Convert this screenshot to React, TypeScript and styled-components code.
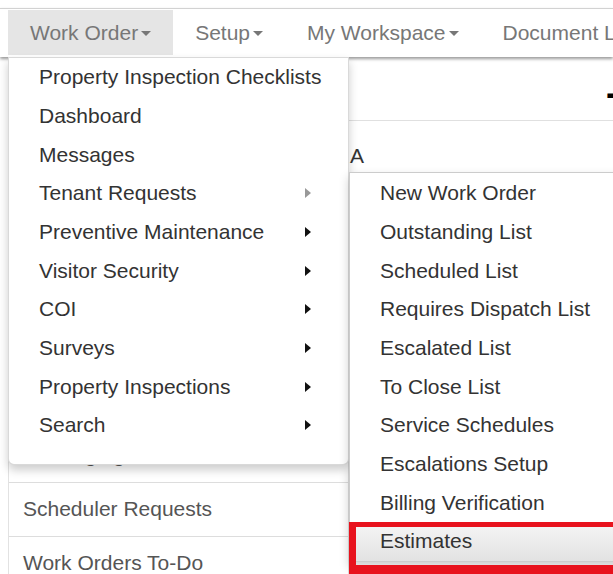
import styled, { createGlobalStyle } from "styled-components";

const GlobalStyle = createGlobalStyle`
  body {
    margin: 0;
    background: #fff;
    font-family: "Liberation Sans", Arial, sans-serif;
    overflow: hidden;
  }
  *, *::before, *::after {
    box-sizing: border-box;
  }
`;

const Page = styled.div`
  position: relative;
  width: 613px;
  height: 574px;
  overflow: hidden;
`;

const NavBar = styled.nav`
  position: relative;
  z-index: 2;
  display: flex;
  height: 49px;
  margin-top: 8px;
  padding: 1px 0 2px 8px;
  border-top: 1px solid #d2d2d2;
  background: #fff;
  box-shadow: 0 2px 3px rgba(0, 0, 0, 0.4);
`;

const NavLink = styled.a<{ $open?: boolean }>`
  display: flex;
  align-items: center;
  padding: 0 22px;
  font-size: 21px;
  color: #777;
  white-space: nowrap;
  background: ${(p) => (p.$open ? "#e5e5e5" : "transparent")};
`;

const Caret = styled.span`
  display: inline-block;
  width: 0;
  height: 0;
  margin: 2px 0 0 3px;
  border-top: 5px solid #777;
  border-left: 5px solid transparent;
  border-right: 5px solid transparent;
`;

const Body = styled.div`
  display: grid;
  grid-template-columns: 341px 1fr;
  margin-left: 8px;
`;

const Sidebar = styled.aside`
  border-left: 1px solid #e2e2e2;
  border-right: 1px solid #ddd;
`;

const SideHeader = styled.div`
  height: 48px;
`;

const SideItem = styled.div`
  display: flex;
  align-items: center;
  height: 54px;
  padding: 0 0 2px 14px;
  border-bottom: 1px solid #ddd;
  font-size: 21px;
  color: #555;
  white-space: nowrap;
`;

const Content = styled.section`
  display: flex;
  flex-direction: column;
`;

const TitleBar = styled.div`
  display: flex;
  align-items: center;
  height: 64px;
  padding: 8px 0 0 257px;
  border-bottom: 1px solid #e0e0e0;
`;

const Title = styled.h2`
  margin: 0;
  font-size: 36px;
  font-weight: bold;
  color: #000;
  white-space: nowrap;
`;

const InfoRow = styled.div`
  display: flex;
  align-items: center;
  height: 70px;
  padding-left: 1px;
  font-size: 21px;
  color: #333;
`;

const Menu = styled.ul<{ $left: number; $top: number; $width: number }>`
  position: absolute;
  z-index: 3;
  left: ${(p) => p.$left}px;
  top: ${(p) => p.$top}px;
  width: ${(p) => p.$width}px;
  margin: 0;
  list-style: none;
  background: #fff;
  border: 1px solid rgba(0, 0, 0, 0.15);
  box-shadow: 0 5px 10px rgba(0, 0, 0, 0.2);
`;

const MainMenu = styled(Menu)`
  padding: 0 0 19px;
  border-radius: 0 0 6px 6px;
`;

const SubMenu = styled(Menu)`
  z-index: 4;
  padding: 1px 0 0;
  border-color: #ccc;
`;

const MenuItem = styled.li<{ $active?: boolean }>`
  display: flex;
  align-items: center;
  justify-content: space-between;
  height: 38.67px;
  padding: 0 37px 0 30px;
  font-size: 21px;
  color: #333;
  white-space: nowrap;
  background: ${(p) =>
    p.$active ? "linear-gradient(to bottom, #f6f6f6, #e2e2e2)" : "transparent"};
`;

const SubArrow = styled.span<{ $muted?: boolean }>`
  width: 0;
  height: 0;
  border-left: 6px solid ${(p) => (p.$muted ? "#999" : "#111")};
  border-top: 5px solid transparent;
  border-bottom: 5px solid transparent;
`;

const Highlight = styled.div`
  position: absolute;
  z-index: 5;
  left: 349px;
  top: 522px;
  width: 280px;
  height: 52px;
  border: solid #e8121d;
  border-width: 5px 0 9px 7px;
`;

const navItems = ["Work Order", "Setup", "My Workspace", "Document Library"];

const sideItems = [
  "Dashboard",
  "Work Orders",
  "Tenant Requests",
  "Inspections",
  "Reports",
  "Calendar",
  "Messaging",
  "Scheduler Requests",
  "Work Orders To-Do",
];

const workOrderMenu = [
  { label: "Property Inspection Checklists" },
  { label: "Dashboard" },
  { label: "Messages" },
  { label: "Tenant Requests", sub: true, open: true },
  { label: "Preventive Maintenance", sub: true },
  { label: "Visitor Security", sub: true },
  { label: "COI", sub: true },
  { label: "Surveys", sub: true },
  { label: "Property Inspections", sub: true },
  { label: "Search", sub: true },
];

const tenantRequestMenu = [
  "New Work Order",
  "Outstanding List",
  "Scheduled List",
  "Requires Dispatch List",
  "Escalated List",
  "To Close List",
  "Service Schedules",
  "Escalations Setup",
  "Billing Verification",
  "Estimates",
];

export default function App() {
  return (
    <Page>
      <GlobalStyle />
      <NavBar>
        {navItems.map((item, i) => (
          <NavLink key={item} $open={i === 0}>
            {item}
            {i < 3 && <Caret />}
          </NavLink>
        ))}
      </NavBar>

      <Body>
        <Sidebar>
          <SideHeader />
          {sideItems.map((item) => (
            <SideItem key={item}>{item}</SideItem>
          ))}
        </Sidebar>
        <Content>
          <TitleBar>
            <Title>- Tenant Portal</Title>
          </TitleBar>
          <InfoRow>A</InfoRow>
        </Content>
      </Body>

      <MainMenu $left={8} $top={57} $width={341}>
        {workOrderMenu.map((item) => (
          <MenuItem key={item.label}>
            {item.label}
            {item.sub && <SubArrow $muted={item.open} />}
          </MenuItem>
        ))}
      </MainMenu>

      <SubMenu $left={349} $top={172} $width={300}>
        {tenantRequestMenu.map((item) => (
          <MenuItem key={item} $active={item === "Estimates"}>
            {item}
          </MenuItem>
        ))}
      </SubMenu>

      <Highlight />
    </Page>
  );
}
